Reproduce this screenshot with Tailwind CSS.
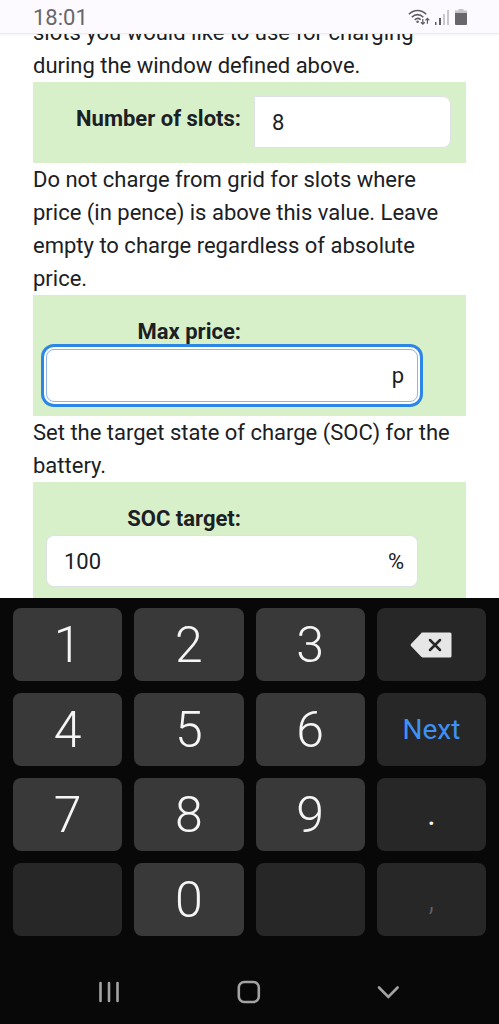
<!DOCTYPE html>
<html lang="en">
<head>
<meta charset="utf-8">
<meta name="viewport" content="width=device-width, initial-scale=1">
<title>Charging settings</title>
<script src="https://cdn.jsdelivr.net/npm/@tailwindcss/browser@4"></script>
</head>
<body class="flex h-screen flex-col bg-white font-['Roboto',sans-serif] text-[22px] leading-[33px] text-[#1b2024]">
  <header class="z-10 flex h-[34px] shrink-0 items-center justify-between border-b border-[#ececec] bg-[#fcfaff] pr-8 pl-[33px] text-[#68666b] shadow-xs">
    <time class="pt-px">18:01</time>
    <div class="flex items-center gap-1">
      <svg class="h-[18px] w-[22px]" viewBox="0 0 23 18" fill="none" stroke="#5f5d61" stroke-width="1.7" role="img" aria-label="Wi-Fi">
        <path d="M1 6.200C6 .8 14 .8 19 6.200M4 9.300c3.500-3.700 8.500-3.700 12 0M7 12c2-1.800 4.500-1.800 6.200-.3"/>
        <circle cx="10" cy="14" r="1.300" fill="#5f5d61" stroke="none"/>
        <path stroke-width="1.300" d="M15.500 11v5.500m-2-2 2 2 2-2M20.300 16v-5.500m-2 2 2-2 2 2"/>
      </svg>
      <svg class="h-[18px] w-[16px]" viewBox="0 0 16 18" role="img" aria-label="Signal">
        <path fill="#5f5d61" d="M1 14h1.500v3H1zM5 10h2v7H5z"/>
        <path fill="#c9c7cb" d="M9 6h2v11H9zM13 2h2v15h-2z"/>
      </svg>
      <svg class="ml-px h-[18px] w-[12px]" viewBox="0 0 12 18" role="img" aria-label="Battery">
        <path fill="#c4c2c6" d="M3.500 1h5v1.500H12V5H0V2.500h3.500z"/>
        <path fill="#68666b" d="M0 5h12v11a1 1 0 0 1-1 1H1a1 1 0 0 1-1-1z"/>
      </svg>
    </div>
  </header>

  <main class="min-h-0 flex-1 overflow-hidden px-[33px]">
    <p class="-mt-[18px]">slots you would like to use for charging during the window defined above.</p>
    <div class="flex h-[81px] items-start bg-[#d8f0ca] pr-[15px]">
      <label for="slots" class="mt-5 w-[208px] shrink-0 text-right font-bold">Number of slots:</label>
      <input id="slots" type="text" inputmode="numeric" value="8" class="mt-[14px] ml-[13px] h-[52px] min-w-0 flex-1 rounded-r-lg border border-[#dee2e6] bg-white px-[17px] outline-none">
    </div>
    <p>Do not charge from grid for slots where price (in pence) is above this value. Leave empty to charge regardless of absolute price.</p>
    <div class="h-[121px] bg-[#d8f0ca] pt-5 pr-12 pl-[13px]">
      <label for="price" class="block w-[195px] text-right font-bold">Max price:</label>
      <div class="mt-px flex h-[53px] items-center rounded-lg border border-[#8fb4e8] bg-white pr-[13px] pl-[17px] shadow-[0_0_0_2px_#fff,0_0_0_5px_#2b87e3]">
        <input id="price" type="text" inputmode="decimal" class="min-w-0 flex-1 bg-transparent outline-none">
        <span>p</span>
      </div>
    </div>
    <p>Set the target state of charge (SOC) for the battery.</p>
    <div class="h-[130px] bg-[#d8f0ca] pt-5 pr-12 pl-[13px]">
      <label for="soc" class="block w-[195px] text-right font-bold">SOC target:</label>
      <div class="flex h-[52px] items-center rounded-lg border border-[#dee2e6] bg-white pr-[13px] pl-[17px]">
        <input id="soc" type="text" inputmode="numeric" value="100" class="min-w-0 flex-1 bg-transparent outline-none">
        <span>%</span>
      </div>
    </div>
  </main>

  <section aria-label="Keypad" class="grid shrink-0 grid-cols-4 gap-3 bg-[#080808] px-[13px] pt-[10px] text-[50px] font-light text-[#f5f5f5]">
    <button class="h-[73px] rounded-lg bg-[#393939] pt-px">1</button>
    <button class="h-[73px] rounded-lg bg-[#393939] pt-px">2</button>
    <button class="h-[73px] rounded-lg bg-[#393939] pt-px">3</button>
    <button class="flex h-[73px] items-center justify-center rounded-lg bg-[#272727]" aria-label="Backspace">
      <svg class="h-[26px] w-[42px]" viewBox="0 0 42 26"><path fill="#e6e6e6" d="M12 .5h28q1.500 0 1.500 1.500v22q0 1.500-1.500 1.500H13q-1 0-2-1L1 14q-.8-1 0-2L11 1.500q.5-1 1-1z"/><path d="m20 8 10 10m0-10-10 10" stroke="#272727" stroke-width="2.500" stroke-linecap="round"/></svg>
    </button>
    <button class="h-[73px] rounded-lg bg-[#393939] pt-px">4</button>
    <button class="h-[73px] rounded-lg bg-[#393939] pt-px">5</button>
    <button class="h-[73px] rounded-lg bg-[#393939] pt-px">6</button>
    <button class="h-[73px] rounded-lg bg-[#272727] text-[28px] font-normal text-[#3e91f5]">Next</button>
    <button class="h-[73px] rounded-lg bg-[#393939] pt-px">7</button>
    <button class="h-[73px] rounded-lg bg-[#393939] pt-px">8</button>
    <button class="h-[73px] rounded-lg bg-[#393939] pt-px">9</button>
    <button class="h-[73px] rounded-lg bg-[#272727] text-[32px] font-normal">.</button>
    <button class="h-[73px] rounded-lg bg-[#272727]" aria-label="Blank"></button>
    <button class="h-[73px] rounded-lg bg-[#393939] pt-px">0</button>
    <button class="h-[73px] rounded-lg bg-[#272727]" aria-label="Blank"></button>
    <button class="h-[73px] rounded-lg bg-[#272727] text-[32px] text-[#626262]">,</button>
  </section>

  <nav aria-label="System" class="flex h-[88px] shrink-0 items-center justify-between bg-[#080808] pt-6 pr-[99px] pl-[97px] text-[#a3a3a3]">
    <button aria-label="Recent apps"><svg class="size-6" viewBox="0 0 24 24" fill="none" stroke="currentColor" stroke-width="2.600" stroke-linecap="round"><path d="M3.500 3v18M12 3v18M20.500 3v18"/></svg></button>
    <button aria-label="Home"><svg class="size-6" viewBox="0 0 24 24" fill="none" stroke="currentColor" stroke-width="2.600"><rect x="1.800" y="2" width="20" height="20" rx="5.500"/></svg></button>
    <button aria-label="Hide keyboard"><svg class="size-6" viewBox="0 0 24 24" fill="none" stroke="currentColor" stroke-width="2.600" stroke-linecap="round"><path d="m3 7.500 9.300 9.500 9.300-9.500"/></svg></button>
  </nav>
</body>
</html>
